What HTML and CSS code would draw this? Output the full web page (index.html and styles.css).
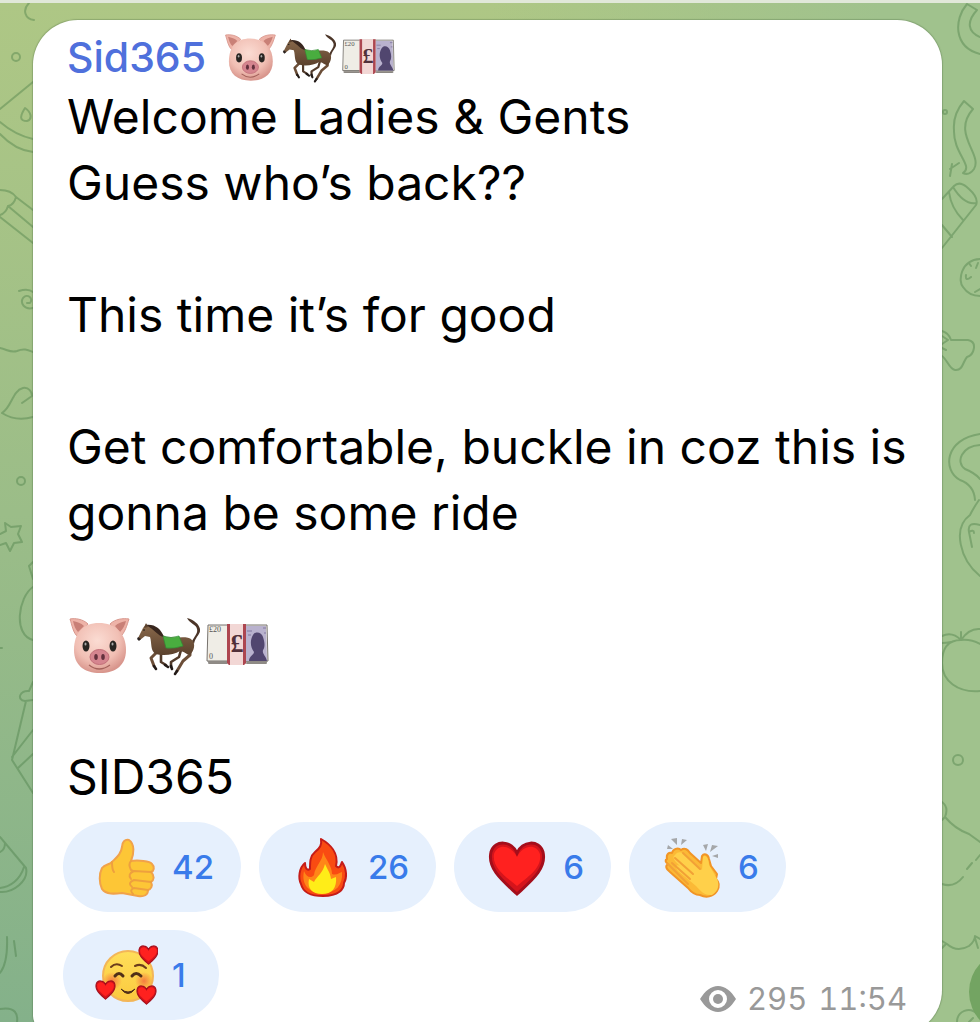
FILE: index.html
```html
<!DOCTYPE html>
<html lang="en">
<head>
    <meta charset="UTF-8">
    <meta name="viewport" content="width=device-width, initial-scale=1.0">
    <title>Sid365</title>
    <link rel="stylesheet" href="styles.css">
</head>
<body>
    <!-- Shared emoji drawings -->
    <svg class="defs" aria-hidden="true">
        <defs>
            <radialGradient id="pigSkin" cx="45%" cy="35%" r="65%">
                <stop offset="0" stop-color="#fbdcd3"/>
                <stop offset="0.65" stop-color="#f1bfb4"/>
                <stop offset="1" stop-color="#d8958c"/>
            </radialGradient>
            <linearGradient id="coat" x1="0" y1="0" x2="0" y2="1">
                <stop offset="0" stop-color="#8a6a4c"/>
                <stop offset="1" stop-color="#5b412d"/>
            </linearGradient>
            <linearGradient id="faceFill" x1="0" y1="0" x2="0" y2="1">
                <stop offset="0" stop-color="#ffdf5a"/>
                <stop offset="1" stop-color="#fbc93e"/>
            </linearGradient>
            <radialGradient id="blush">
                <stop offset="0" stop-color="#f4733f" stop-opacity="0.9"/>
                <stop offset="1" stop-color="#f4733f" stop-opacity="0"/>
            </radialGradient>
        </defs>
        <symbol id="pig" viewBox="0 0 64 64">
            <path d="M3 6C8 5 16 6 21 11L11 24C6 20 5 12 3 6Z" fill="#eeb3a8" stroke="#d8978d"/>
            <path d="M62 6C56 5 48 6 43 11L53 24C58 20 60 12 62 6Z" fill="#eeb3a8" stroke="#d8978d"/>
            <path d="M6 8C10 9 14 10 17 13L11 19C8 16 7 12 6 8ZM59 8C55 9 51 10 48 13L53 19C56 16 58 12 59 8Z" fill="#c98077"/>
            <path d="M32 10C48 10 59 20 59 37C59 52 49 60 33 60C17 60 7 52 7 37C7 20 16 10 32 10Z" fill="url(#pigSkin)"/>
            <ellipse cx="19" cy="33" rx="3.5" ry="5.5" fill="#292522"/>
            <ellipse cx="46" cy="33" rx="3.5" ry="5.5" fill="#292522"/>
            <ellipse cx="18.500" cy="31" rx="1" ry="1.500" fill="#aaa"/>
            <ellipse cx="45.500" cy="31" rx="1" ry="1.500" fill="#aaa"/>
            <ellipse cx="32.500" cy="44" rx="9.500" ry="7.500" fill="#d5858f" stroke="#c26f78"/>
            <ellipse cx="29" cy="44" rx="1.800" ry="3" fill="#63313d"/>
            <ellipse cx="36" cy="44" rx="1.800" ry="3" fill="#63313d"/>
            <path d="M22 52Q32 60 43 52" fill="none" stroke="#a4625b" stroke-width="1.300"/>
        </symbol>
        <symbol id="horse" viewBox="0 0 64 64">
            <path d="M56 28C59 23 62 20 61 16C60 11 54 11 51 5C58 7 63 11 64 16C65 21 59 24 58 31Z" fill="#4b3528"/>
            <g fill="none" stroke-linejoin="round" stroke-linecap="round">
                <path d="M21 39L15 45L18 53" stroke="#6b4e38" stroke-width="3"/>
                <path d="M25 40L25 49L30 52" stroke="#513a2a" stroke-width="2.600"/>
                <path d="M45 37L43 44L35 49L35 54" stroke="#513a2a" stroke-width="2.600"/>
                <path d="M54 36L54 42L47 48L41 58" stroke="#6b4e38" stroke-width="3"/>
                <path d="M18 53L20 56M29 52L32 54M35 53L36 56M41 58L39 61" stroke="#221a17" stroke-width="2.600"/>
            </g>
            <path d="M2 25L7 15L10 11L12 13C20 13 23 21 30 24C40 26 51 22 56 27C60 31 58 38 54 42C51 42 48 38 44 38C38 42 27 43 20 41C14 38 16 30 14 24L9 23L4 27Z" fill="url(#coat)"/>
            <path d="M10 12C19 11 25 16 28 24C22 23 19 17 10 12Z" fill="#38261e"/>
            <path d="M8 15L10 10L12 14Z" fill="#5b412d"/>
            <circle cx="8" cy="17" r="0.800" fill="#111"/>
            <path d="M2 24L5 26L3 28L1 26Z" fill="#2b2220"/>
            <path d="M27 23Q35 26 43 23L47 33Q38 36 30 35Z" fill="#49ad3f" stroke="#2f8d33" stroke-width="0.700"/>
        </symbol>
        <symbol id="money" viewBox="0 0 64 64">
            <path d="M2 47L63 47L61 51L4 51Z" fill="#a7a39d"/>
            <path d="M3 12H62L63 48H2Z" fill="#efede6" stroke="#77736e" stroke-width="1"/>
            <path d="M41 13H61L62 48H41Z" fill="#b9b2ce"/>
            <path d="M44 48C44 43 49 42 49 39C45 34 45 27 48 22C51 17 57 20 58 24C60 30 60 34 58 37C57 41 61 43 62 48Z" fill="#51466f"/>
            <path d="M42 18H47M43 22H46M58 15H61M59 20H61" stroke="#82799f"/>
            <path d="M22 11H41V50L39 52H24L22 50Z" fill="#f2d7d5"/>
            <path d="M22 11H25V52H24L22 50ZM38 11H41V50L39 52H38Z" fill="#ad4650"/>
            <path d="M3 50H22M42 50H62" stroke="#77736e"/>
        </symbol>
        <symbol id="heart" viewBox="0 0 64 64">
            <path d="M32 18C27 6 10 4 6 17C2 34 19 47 32 59C45 47 62 34 58 17C54 4 37 6 32 18Z" fill="#d5141b" stroke="#a40e1b" stroke-width="3"/>
            <path d="M32 22C26 10 13 8 9 19C7 33 20 41 32 51C44 41 57 33 55 19C51 8 38 10 32 22Z" fill="#ff211f"/>
        </symbol>
    </svg>

    <main class="chat">
        <svg class="doodles doodles-left" width="36" height="1022" viewBox="0 0 36 1022" aria-hidden="true">
            <path d="M29 3C22 10 25 19 34 20M0 109L33 82M0 122Q15 135 33 139M0 134Q15 150 33 152M25 108C20 116 19 121 27 121C33 119 31 112 25 108Z"/>
            <circle cx="16" cy="57" r="4"/>
            <path d="M0 190Q11 190 16 197L33 210M16 197Q14 205 8 206Q6 213 0 215M8 206L33 227M0 217L33 243M19 291Q28 288 33 292M33 308C24 310 20 303 23 298C27 293 34 298 30 303L27 303M0 348C8 350 11 353 17 351C24 348 28 350 33 352M2 413C12 407 12 391 23 388C29 387 32 392 32 396L22 403M2 413Q16 422 33 417"/>
            <circle cx="21" cy="481" r="4"/>
            <path d="M5 523L11 527L21 526L18 534L22 542L14 543L10 551L6 543L0 545M5 523L6 531L0 534M33 562L29 566L33 579M33 587C18 597 13 635 33 640M0 648H2M33 682L29 691C20 690 16 700 25 701L33 700M26 701L12 760L33 793M12 757L33 730M18 768L33 754M0 837L26 868C29 881 13 893 0 892M24 867C20 880 10 887 0 888M5 843Q5 850 0 852M7 937Q8 963 0 973M14 941L16 956M0 1009C16 1006 18 1015 17 1022"/>
        </svg>
        <svg class="doodles doodles-right" width="40" height="1022" viewBox="0 0 40 1022" aria-hidden="true">
            <path d="M27 4C14 19 13 47 40 54M27 4L37 10C26 22 28 32 40 37M24 101L33 109C11 134 43 154 34 169Q29 176 23 173C34 166 13 153 14 130C13 118 18 108 24 101ZM12 164L10 176M10 169L19 163M2 199L14 186Q20 180 29 189Q39 198 36 205L2 248M13 187Q24 205 36 203M9 192Q11 208 23 220M2 225L12 237"/>
            <circle cx="5" cy="112" r="2"/>
            <path d="M40 259C20 260 18 282 23 287Q29 296 40 296M26 275Q25 282 31 277M29 263L31 266M38 263L36 268M35 292L40 289M2 331Q9 333 11 340H28C38 342 34 355 27 357C23 361 23 371 15 370C9 369 7 359 2 356M2 336L8 340L2 344M2 348L6 350M40 434C5 439 2 470 20 480Q34 485 35 500M40 445C22 446 15 462 25 469Q35 473 40 479M39 500Q34 507 30 515C12 528 20 560 40 576M40 525Q27 521 29 532L32 547M29 532Q34 529 34 533"/>
            <path d="M21 640C7 640 2 650 2 663C2 681 18 693 40 691M21 640Q31 639 40 644M2 636Q12 631 21 640Q29 628 40 629M21 640V632M2 643Q6 643 11 642"/>
            <circle cx="18" cy="760" r="5"/>
            <path d="M2 802Q9 807 5 817L2 820M5 817Q15 829 29 834L40 842M40 855L36 860M32 863L27 869M23 877C16 886 8 886 2 884M2 941L7 944Q17 953 29 946Q35 941 35 936L40 939M2 948L6 944M35 938L38 948M17 1022C17 1011 30 1006 37 1014M29 1022L33 1018"/>
        </svg>

        <article class="bubble">
            <header class="author">
                <a class="author-name" href="#">Sid365</a>
                <span class="emojis emojis-small" role="img" aria-label="Pig, horse, pound notes">
                    <svg><use href="#pig"/></svg>
                    <svg><use href="#horse"/></svg>
                    <svg viewBox="0 0 64 64">
                        <use href="#money"/>
                        <text class="pound" x="32" y="39" text-anchor="middle">£</text>
                        <text class="note" x="4" y="19">£20</text>
                        <text class="note" x="4" y="46">0</text>
                    </svg>
                </span>
            </header>

            <div class="message">
                <p>Welcome Ladies &amp; Gents<br>Guess who’s back??</p>
                <p>This time it’s for good</p>
                <p>Get comfortable, buckle in coz this is gonna be some ride</p>
                <div class="emojis" role="img" aria-label="Pig, horse, pound notes">
                    <svg><use href="#pig"/></svg>
                    <svg><use href="#horse"/></svg>
                    <svg viewBox="0 0 64 64">
                        <use href="#money"/>
                        <text class="pound" x="32" y="39" text-anchor="middle">£</text>
                        <text class="note" x="4" y="19">£20</text>
                        <text class="note" x="4" y="46">0</text>
                    </svg>
                </div>
                <p>SID365</p>
            </div>

            <footer class="reactions">
                <button type="button" class="reaction" aria-label="Thumbs up 42">
                    <svg viewBox="0 0 64 64">
                        <path d="M8 33C11 29 15 30 18 27C23 22 27 19 28 12C28 7 31 4 35 5C41 9 40 19 37 26C44 25 56 26 58 29C61 32 60 36 57 37C61 41 60 45 57 47C59 51 57 54 54 55C54 60 50 62 44 61L28 58C21 59 12 60 8 54C5 48 5 39 8 33Z" fill="#fdc636" stroke="#f1a24a" stroke-width="2" stroke-linejoin="round"/>
                        <path d="M18 27Q18 35 20 37M57 37L40 36Q33 39 37 44M37 26Q34 29 37 35L39 36M57 47L40 45Q33 48 38 52M54 55L40 53Q35 55 39 59" fill="none" stroke="#eea03e" stroke-width="2" stroke-linecap="round"/>
                    </svg>
                    <span>42</span>
                </button>
                <button type="button" class="reaction" aria-label="Fire 26">
                    <svg viewBox="0 0 64 64">
                        <path d="M31 4C40 9 49 18 46 31C50 35 51 29 52 27C57 34 57 43 54 48C54 54 49 61 33 61C19 61 13 57 11 49C8 43 9 33 15 28C15 33 17 36 20 34C20 27 20 21 25 17C30 13 32 10 31 4Z" fill="#f94b12" stroke="#c51c18" stroke-width="2" stroke-linejoin="round"/>
                        <path d="M33 17C36 25 42 31 42 39C47 41 50 37 52 37C53 50 46 58 33 58C19 58 11 50 14 36C16 42 21 44 24 40C25 31 33 26 33 17Z" fill="#ff8618"/>
                        <path d="M35 29C38 36 40 37 41 44L46 42C47 53 42 59 32 59C22 59 17 53 19 44L24 47C27 41 33 38 35 29Z" fill="#ffed18"/>
                    </svg>
                    <span>26</span>
                </button>
                <button type="button" class="reaction" aria-label="Heart 6">
                    <svg><use href="#heart"/></svg>
                    <span>6</span>
                </button>
                <button type="button" class="reaction" aria-label="Clapping hands 6">
                    <svg viewBox="0 0 64 64">
                        <path d="M11 4L17 3L17 10ZM22 4L27 5L21 10ZM8 10L13 14L7 14ZM43 10L48 9L46 16ZM52 10L58 11L50 17ZM52 21L58 19L58 23Z" fill="#a5a7a9"/>
                        <path d="M7 24C6 19 9 17 12 18C13 14 18 12 21 15C25 12 28 15 30 18L41 28L42 21C44 18 48 19 49 24L51 31L57 39L56 44C59 47 60 51 57 56C53 62 46 63 40 60C36 60 31 57 28 53L10 37C6 34 5 31 8 29C5 27 5 25 7 24Z" fill="#fbb936" stroke="#f19527" stroke-width="2" stroke-linejoin="round"/>
                        <path d="M15 20C18 16 22 17 25 20L42 35L43 22C46 19 49 24 49 30L56 42C60 48 59 56 52 60C44 61 40 55 36 51L18 36C14 31 17 29 20 31L15 26C13 23 13 21 15 20Z" fill="#ffd04a"/>
                        <path d="M15 23L33 39M23 18L40 34M12 28L30 44M8 29L28 49" fill="none" stroke="#f2a136" stroke-width="2" stroke-linecap="round"/>
                    </svg>
                    <span>6</span>
                </button>
                <button type="button" class="reaction" aria-label="Smiling face with hearts 1">
                    <svg viewBox="0 0 64 64">
                        <circle cx="34" cy="33" r="25" fill="url(#faceFill)" stroke="#f3b658" stroke-width="2"/>
                        <ellipse cx="18" cy="38" rx="10" ry="9" fill="url(#blush)"/>
                        <ellipse cx="50" cy="38" rx="9" ry="9" fill="url(#blush)"/>
                        <path d="M17 24Q22 19 28 23M41 23Q47 20 52 25" fill="none" stroke="#6c3d1c" stroke-width="2" stroke-linecap="round"/>
                        <path d="M21 33Q25 28 29 33M38 33Q42 28 47 33" fill="none" stroke="#513018" stroke-width="3" stroke-linecap="round"/>
                        <path d="M27 46Q34 52 41 46Q34 55 27 46Z" fill="#513018" stroke="#513018" stroke-linejoin="round"/>
                        <use href="#heart" x="43" y="0" width="23" height="23"/>
                        <use href="#heart" x="0" y="35" width="23" height="23"/>
                        <use href="#heart" x="41" y="40" width="23" height="23"/>
                    </svg>
                    <span>1</span>
                </button>
                <div class="meta">
                    <svg viewBox="0 0 36 26" aria-hidden="true">
                        <path fill-rule="evenodd" d="M0 13C5 5 11 0 18 0C25 0 31 5 36 13C31 21 25 26 18 26C11 26 5 21 0 13ZM18 4A9 9 0 1 0 18 22A9 9 0 1 0 18 4Z"/>
                        <circle cx="18" cy="13" r="5"/>
                    </svg>
                    <span>295</span>
                    <time datetime="11:54">11:54</time>
                </div>
            </footer>
        </article>
        <button type="button" class="share" aria-label="Share"></button>
    </main>
</body>
</html>
```
FILE: styles.css
```css
* {
    box-sizing: border-box;
}
body {
    margin: 0;
    font-family: Inter, "Liberation Sans", sans-serif;
    color: #000;
}
.defs {
    position: absolute;
    width: 0;
    height: 0;
}
.chat {
    position: relative;
    height: 100vh;
    overflow: hidden;
    padding: 17px 38px 0 33px;
    border-top: 3px solid #e1e8d9;
    background:
        linear-gradient(to right, transparent 50%, #a0c28d 90%),
        linear-gradient(#aec785, #9bbd88 50%, #84b18a);
}
.doodles {
    position: absolute;
    top: -3px;
    fill: none;
    stroke: #467b43;
    stroke-opacity: 0.4;
    stroke-width: 2;
    stroke-linejoin: round;
    stroke-linecap: round;
}
.doodles-left {
    left: 0;
}
.doodles-right {
    right: 0;
}
.bubble {
    position: relative;
    padding: 0 30px 15px;
    background-color: #fff;
    border-radius: 45px 45px 45px 20px;
    box-shadow: 0 0 1px 1px rgba(70, 100, 60, 0.3);
}
.author {
    display: flex;
    align-items: center;
    gap: 17px;
    height: 64px;
    padding: 10px 4px 0;
}
.author-name {
    color: #4f70dc;
    font-size: 41px;
    font-weight: 500;
    text-decoration: none;
}
.emojis {
    display: flex;
    align-items: center;
    gap: 5px;
    height: 66px;
    margin-bottom: 66px;
}
.emojis svg {
    width: 64px;
    height: 64px;
}
.emojis-small {
    height: 54px;
    margin-bottom: 0;
}
.emojis-small svg {
    width: 54px;
    height: 54px;
}
.pound {
    font: bold 26px "Liberation Serif", serif;
    fill: #51303a;
}
.note {
    font: 8px "Liberation Serif", serif;
    fill: #555;
}
.message {
    padding: 0 0 12px 4px;
    font-size: 48px;
    line-height: 66px;
}
.message p {
    margin: 0 0 66px;
}
.message p:last-child {
    margin-bottom: 0;
}
.reactions {
    display: flex;
    flex-wrap: wrap;
    gap: 18px;
}
.reaction {
    display: flex;
    align-items: center;
    gap: 14px;
    min-width: 156px;
    height: 90px;
    padding: 0 27px 0 31px;
    border: none;
    border-radius: 45px;
    background-color: #e6f0fd;
    color: #397bea;
    font-family: inherit;
    font-size: 33px;
    font-weight: 500;
    cursor: pointer;
}
.reaction svg {
    width: 64px;
    height: 64px;
}
.reaction:hover {
    background-color: #d8e7fb;
}
.meta {
    display: flex;
    align-items: center;
    align-self: flex-end;
    gap: 11px;
    margin-left: auto;
    padding-right: 5px;
    color: #999;
    font-size: 31px;
    font-variant-numeric: tabular-nums;
    line-height: 42px;
}
.meta svg {
    width: 36px;
    height: 26px;
    fill: #999;
}
.share {
    position: absolute;
    right: -73px;
    bottom: -12px;
    width: 84px;
    height: 84px;
    border: none;
    border-radius: 50%;
    background-color: #73a462;
}
```
